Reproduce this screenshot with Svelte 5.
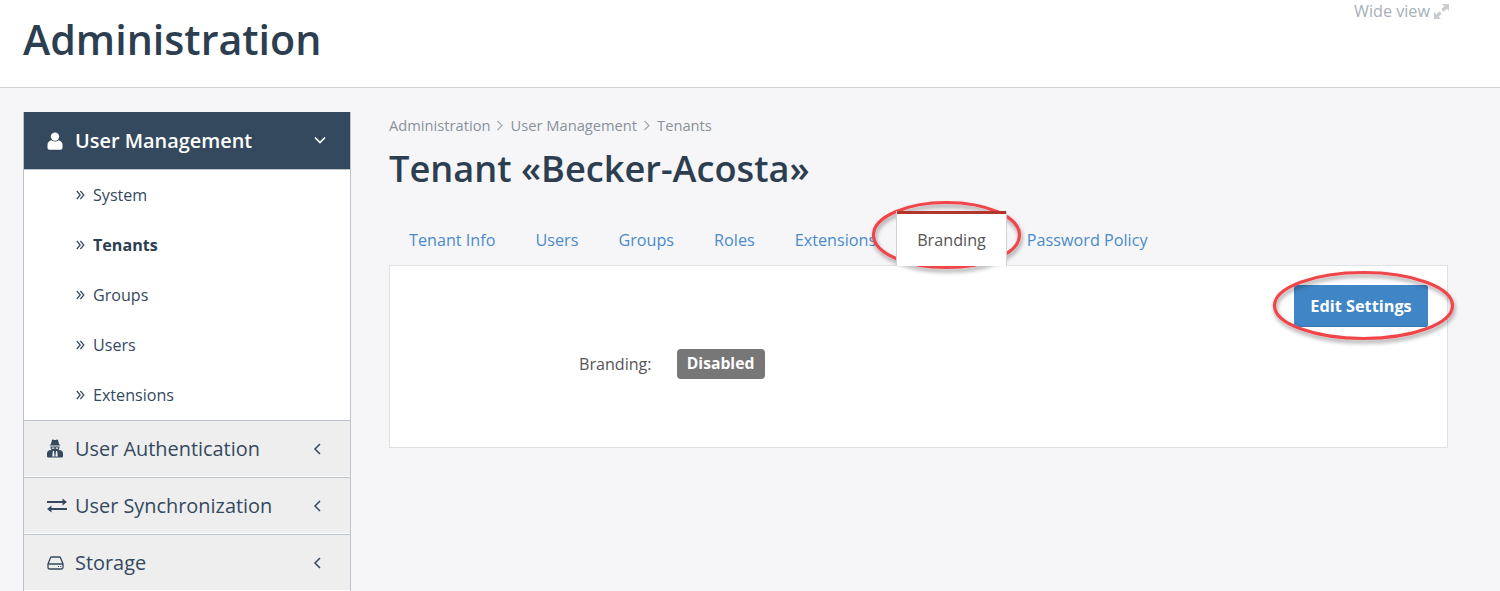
<script>
	const subItems = [
		{ label: 'System' },
		{ label: 'Tenants', active: true },
		{ label: 'Groups' },
		{ label: 'Users' },
		{ label: 'Extensions' }
	]

	const tabs = ['Tenant Info', 'Users', 'Groups', 'Roles', 'Extensions', 'Branding', 'Password Policy']
	const crumbs = ['Administration', 'User Management', 'Tenants']
</script>

<div class="page">
	<header class="top">
		<h1>Administration</h1>
		<a class="wide">Wide view
			<svg width="15" height="15" viewBox="0 0 15 15"><path d="M8 0H15V7L12.700 4.700 9.700 7.700 7.300 5.300 10.300 2.300ZM7 15H0V8L2.300 10.300 5.300 7.300 7.700 9.700 4.700 12.700Z" fill="#c9cdd1"/></svg>
		</a>
	</header>

	<div class="body">
		<aside class="side">
			<div class="group open">
				<svg class="ico" width="16" height="18" viewBox="0 0 16 18"><circle cx="8" cy="4.600" r="4.200" fill="#fff"/><path d="M.5 15.800V12.500C.5 10 2.500 8.800 4.500 8.200 6.500 9.800 9.500 9.800 11.500 8.200 13.500 8.800 15.500 10 15.500 12.500V15.800C15.500 17 14.700 17.800 13.600 17.800H2.400C1.300 17.800.5 17 .5 15.800Z" fill="#fff"/></svg>
				<span>User Management</span>
				<svg class="chev" width="14" height="14" viewBox="0 0 14 14"><path d="M2 4.500 7 9.500 12 4.500" fill="none" stroke="#fff" stroke-width="1.600"/></svg>
			</div>
			<ul>
				{#each subItems as item}
					<li class:active={item.active}>
						<svg width="9" height="10" viewBox="0 0 9 10"><path d="M.8 1 4.200 5 .8 9M4.400 1 7.800 5 4.400 9" fill="none" stroke="#34495e" stroke-width="1.200"/></svg>
						{item.label}
					</li>
				{/each}
			</ul>
			<div class="group">
				<svg class="ico" width="16" height="19" viewBox="0 0 16 19"><path d="M4 5 4.900 1.200C5.100.4 5.800.5 6.500.8 7.500 1.200 8.500 1.200 9.500.8 10.200.5 10.900.4 11.100 1.200L12 5 13.500 6.500H2.500Z" fill="#34495e"/><path d="M3.500 7.500H12.500C12.500 9 12.200 10.200 11.500 11L13.500 11.300C15.200 11.700 16 13 16 14.800V17C16 18 15.300 18.500 14.500 18.500H1.500C.7 18.500 0 18 0 17V14.800C0 13 .8 11.700 2.500 11.300L4.500 11C3.800 10.200 3.500 9 3.500 7.500Z" fill="#34495e"/><path d="M4.800 8.500H7.300V9.800H4.800ZM8.700 8.500H11.200V9.800H8.700ZM5.800 12H7L7.600 17.500H5.200ZM9 12H10.200L10.800 17.500H8.400Z" fill="#eee"/></svg>
				<span>User Authentication</span>
				<svg class="chev" width="14" height="14" viewBox="0 0 14 14"><path d="M9 2 4 7 9 12" fill="none" stroke="#34495e" stroke-width="1.500"/></svg>
			</div>
			<div class="group">
				<svg class="ico" width="20" height="15" viewBox="0 0 20 15"><path d="M0 3H15.500V0.500L20 4 15.500 7.500V5H0ZM20 10H4.500V7.500L0 11 4.500 14.500V12H20Z" fill="#34495e"/></svg>
				<span>User Synchronization</span>
				<svg class="chev" width="14" height="14" viewBox="0 0 14 14"><path d="M9 2 4 7 9 12" fill="none" stroke="#34495e" stroke-width="1.500"/></svg>
			</div>
			<div class="group">
				<svg class="ico" width="17" height="14" viewBox="0 0 17 14"><path d="M1 8 3.500 1.800C3.700 1.300 4.100 1 4.700 1H12.300C12.900 1 13.300 1.300 13.500 1.800L16 8V11.500C16 12.300 15.400 13 14.500 13H2.500C1.600 13 1 12.300 1 11.500ZM1 8H16" fill="none" stroke="#34495e" stroke-width="1.300"/><path d="M11 10.500H12M13.300 10.500H14.300" stroke="#34495e" stroke-width="1.200"/></svg>
				<span>Storage</span>
				<svg class="chev" width="14" height="14" viewBox="0 0 14 14"><path d="M9 2 4 7 9 12" fill="none" stroke="#34495e" stroke-width="1.500"/></svg>
			</div>
		</aside>

		<main class="content">
			<nav class="crumbs">
				{#each crumbs as crumb, i}
					{#if i > 0}
						<svg width="8" height="11" viewBox="0 0 8 11"><path d="M1.500 1 6 5.500 1.500 10" fill="none" stroke="#a3a9af" stroke-width="1.200"/></svg>
					{/if}
					<span>{crumb}</span>
				{/each}
			</nav>
			<h2>Tenant «Becker-Acosta»</h2>

			<div class="tabs">
				{#each tabs as tab}
					<div class="tab" class:current={tab === 'Branding'}>{tab}</div>
				{/each}
			</div>
			<section class="panel">
				<div class="actions"><button>Edit Settings</button></div>
				<div class="field">
					<span class="field-label">Branding:</span>
					<span class="badge">Disabled</span>
				</div>
			</section>
		</main>
	</div>

	<svg class="marks" width="1500" height="591" viewBox="0 0 1500 591">
		<defs>
			<filter id="sh" x="-10%" y="-20%" width="120%" height="150%">
				<feDropShadow dx="1" dy="3" stdDeviation="2" flood-color="#000" flood-opacity=".4"/>
			</filter>
		</defs>
		<ellipse cx="946.500" cy="235" rx="73" ry="32.500" fill="none" stroke="#f0454a" stroke-width="3.200" filter="url(#sh)"/>
		<ellipse cx="1363.500" cy="305.500" rx="89" ry="33" fill="none" stroke="#f0454a" stroke-width="3.200" filter="url(#sh)"/>
	</svg>
</div>

<style>
	:global(body) {
		margin: 0;
		background: #f6f6f9;
		font-family: "Open Sans", sans-serif;
		color: #34495e;
		overflow: hidden;
	}

	.page {
		position: relative;
		height: 591px;
		overflow: hidden;
	}

	.top {
		height: 87px;
		background: #fff;
		border-bottom: 1px solid #d0d3d6;
		display: flex;
		justify-content: space-between;
		align-items: flex-start;
		padding: 0 51px 0 23px;
	}

	.top h1 {
		margin: 13px 0 0;
		font-size: 41.200px;
		line-height: 52px;
		font-weight: 600;
		color: #2c3e50;
	}

	.wide {
		margin-top: 1px;
		font-size: 16.200px;
		line-height: 20px;
		color: #a7b0b8;
		display: flex;
		align-items: center;
		gap: 4px;
	}

	.body {
		display: flex;
		padding: 24px 52px 0 23px;
		gap: 38px;
	}

	.side {
		width: 328px;
		flex: none;
		box-sizing: border-box;
		border: solid #bcc3ca;
		border-width: 0 1px;
		background: #fff;
	}

	.group {
		height: 56px;
		box-sizing: border-box;
		background: #eee;
		border-top: 1px solid #bcc3ca;
		display: flex;
		align-items: center;
		padding-left: 23px;
		font-size: 19.900px;
		color: #34495e;
		position: relative;
		margin-bottom: 1px;
	}

	.group span {
		position: absolute;
		left: 51px;
	}

	.ico {
		flex: none;
	}

	.chev {
		position: absolute;
		right: 25px;
		top: 21px;
	}

	.group.open {
		height: 57px;
		background: #34495e;
		color: #fff;
		font-weight: 600;
		border-top: 0;
		margin: 0;
	}

	.group.open .chev {
		right: 23px;
	}

	ul {
		list-style: none;
		margin: 0;
		padding: 0 0 0 52px;
		border-top: 1px solid #bcc3ca;
		height: 250px;
	}

	li {
		height: 50px;
		display: flex;
		align-items: center;
		gap: 8px;
		font-size: 16.100px;
		color: #34495e;
	}

	li.active {
		font-weight: 700;
		color: #2c3e50;
	}

	.content {
		flex: 1;
		min-width: 0;
	}

	.crumbs {
		display: flex;
		align-items: center;
		gap: 6px;
		font-size: 14.700px;
		line-height: 20px;
		color: #8a9199;
		margin-top: 3px;
	}

	h2 {
		margin: 10px 0 0;
		font-size: 36.200px;
		line-height: 46px;
		font-weight: 600;
		color: #2c3e50;
	}

	.tabs {
		display: flex;
		margin-top: 20px;
		height: 54px;
		box-sizing: border-box;
	}

	.tab {
		padding: 0 20px;
		font-size: 16.220px;
		line-height: 58px;
		color: #4a8bc9;
	}

	.tab.current {
		background: #fff;
		color: #555;
		border: solid #cfd2d5;
		border-width: 0 1px;
		box-shadow: inset 0 3px 0 #b2362c;
		height: 55px;
		box-sizing: border-box;
		position: relative;
		z-index: 1;
	}

	.panel {
		height: 183px;
		box-sizing: border-box;
		background: #fff;
		border: 1px solid #dfe1e4;
		position: relative;
	}

	.actions {
		display: flex;
		justify-content: flex-end;
		padding: 19px 19px 0 0;
	}

	button {
		width: 134px;
		height: 42px;
		padding: 0;
		border: 0;
		border-radius: 3px;
		background: #4086c6;
		box-shadow: inset 0 -1px 0 #3676b0;
		color: #fff;
		font: 700 16.300px "Open Sans", sans-serif;
	}

	.field {
		display: flex;
		align-items: center;
		margin-top: 22px;
		padding-left: 189px;
		gap: 25px;
	}

	.field-label {
		font-size: 16.100px;
		color: #555;
	}

	.badge {
		background: #777;
		color: #fff;
		font-size: 15.700px;
		font-weight: 700;
		border-radius: 4px;
		width: 88px;
		height: 30px;
		line-height: 29px;
		text-align: center;
	}

	.marks {
		position: absolute;
		left: 0;
		top: 0;
		pointer-events: none;
	}
</style>
